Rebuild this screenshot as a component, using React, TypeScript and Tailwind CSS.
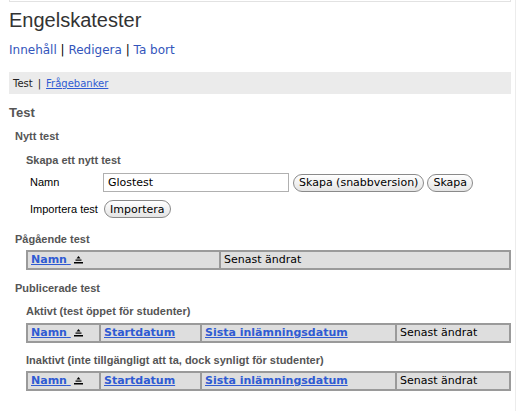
import React from 'react';

const verdana = { fontFamily: '"DejaVu Sans", Verdana, sans-serif' };
const arial = { fontFamily: '"Liberation Sans", Arial, sans-serif' };

function SortIcon() {
  return (
    <svg width="9" height="8" viewBox="0 0 9 8" className="inline-block ml-[3px] align-[-1px]">
      <path d="M4.5 0 L6.5 2.5 L2.5 2.5 Z" fill="#000" />
      <rect x="1.5" y="3.5" width="6" height="1.2" fill="#000" />
      <rect x="0" y="6" width="9" height="1.5" fill="#000" />
    </svg>
  );
}

function LinkHead(props: { text: string; sort?: boolean }) {
  return (
    <a href="#" className="font-bold text-[#2f5bd3] underline text-[11px]" style={verdana}>
      {props.text}
      {props.sort && ' '}
      {props.sort && <SortIcon />}
    </a>
  );
}

function Cell(props: { w: string; children: React.ReactNode }) {
  return (
    <td className={'border border-[#9a9a9a] bg-[#dedede] px-[3px] py-0 h-[18px] leading-[14px] text-[11px] text-black ' + props.w}>
      {props.children}
    </td>
  );
}

function FullTable() {
  return (
    <table className="border-separate border-spacing-0 border border-[#9a9a9a] w-[485px]" style={verdana}>
      <tbody>
        <tr>
          <Cell w="w-[73px]"><LinkHead text="Namn" sort /></Cell>
          <Cell w="w-[101px]"><LinkHead text="Startdatum" /></Cell>
          <Cell w="w-[195px]"><LinkHead text="Sista inlämningsdatum" /></Cell>
          <Cell w="">Senast ändrat</Cell>
        </tr>
      </tbody>
    </table>
  );
}

export default function App() {
  const btn =
    'h-[18px] px-[5px] rounded-full border border-[#8a8a8a] bg-gradient-to-b from-white to-[#e4e4e4] text-[11px] text-black leading-none';
  return (
    <div className="w-[517px] h-[411px] bg-white relative overflow-hidden" style={arial}>
      <div className="absolute right-[1px] top-0 bottom-0 w-px bg-[#ececec]" />
      <div className="ml-[9px] mr-[6px] h-[2px] border-b border-l border-r border-[#e2e2e2]" />
      <div className="pl-[9px] w-[511px]">
        <h1 className="text-[20px] text-[#333] leading-[20px] mt-[8px]">Engelskatester</h1>
        <div className="mt-[13px] text-[12px] leading-[14px] text-[#3355bb]" style={verdana}>
          <a href="#">Innehåll</a>
          <span className="text-black"> | </span>
          <a href="#">Redigera</a>
          <span className="text-black"> | </span>
          <a href="#">Ta bort</a>
        </div>
        <div className="mt-[15px] h-[22px] bg-[#ebebeb] flex items-center pl-[4px] text-[10px] text-[#222]" style={verdana}>
          <span>Test</span>
          <span className="mx-[5px]">|</span>
          <a href="#" className="text-[#2f5bd3] underline">Frågebanker</a>
        </div>
        <h2 className="mt-[11px] text-[13px] leading-[16px] font-bold text-[#555]">Test</h2>
        <h3 className="mt-[9px] ml-[6px] text-[11px] leading-[13px] font-bold text-[#555]">Nytt test</h3>
        <h4 className="mt-[11px] ml-[17px] text-[11px] leading-[13px] font-bold text-[#555]">Skapa ett nytt test</h4>
        <div className="mt-[6px] ml-[21px] flex items-center h-[19px] text-[11px] text-black">
          <span className="w-[73px]">Namn</span>
          <input
            defaultValue="Glostest"
            className="w-[186px] h-[19px] border border-[#b0b0b0] px-[4px] text-[11px]"
            style={verdana}
          />
          <button className={btn + ' ml-[4px]'} style={verdana}>Skapa (snabbversion)</button>
          <button className={btn + ' ml-[3px]'} style={verdana}>Skapa</button>
        </div>
        <div className="mt-[8px] ml-[21px] flex items-center h-[18px] text-[11px] text-black">
          <span className="w-[73px]">Importera test</span>
          <button className={btn + ' ml-[1px]'} style={verdana}>Importera</button>
        </div>
        <h3 className="mt-[15px] ml-[6px] text-[11px] leading-[13px] font-bold text-[#555]">Pågående test</h3>
        <table className="mt-[4px] border-separate border-spacing-0 border border-[#9a9a9a] w-[485px] ml-[17px]" style={verdana}>
          <tbody>
            <tr>
              <Cell w="w-[193px]"><LinkHead text="Namn" sort /></Cell>
              <Cell w="">Senast ändrat</Cell>
            </tr>
          </tbody>
        </table>
        <h3 className="mt-[12px] ml-[6px] text-[11px] leading-[13px] font-bold text-[#555]">Publicerade test</h3>
        <h4 className="mt-[10px] ml-[17px] text-[11px] leading-[13px] font-bold text-[#555]">Aktivt (test öppet för studenter)</h4>
        <div className="mt-[5px] ml-[17px]"><FullTable /></div>
        <h4 className="mt-[11px] ml-[17px] text-[11px] leading-[13px] font-bold text-[#555]">Inaktivt (inte tillgängligt att ta, dock synligt för studenter)</h4>
        <div className="mt-[4px] ml-[17px]"><FullTable /></div>
      </div>
    </div>
  );
}
